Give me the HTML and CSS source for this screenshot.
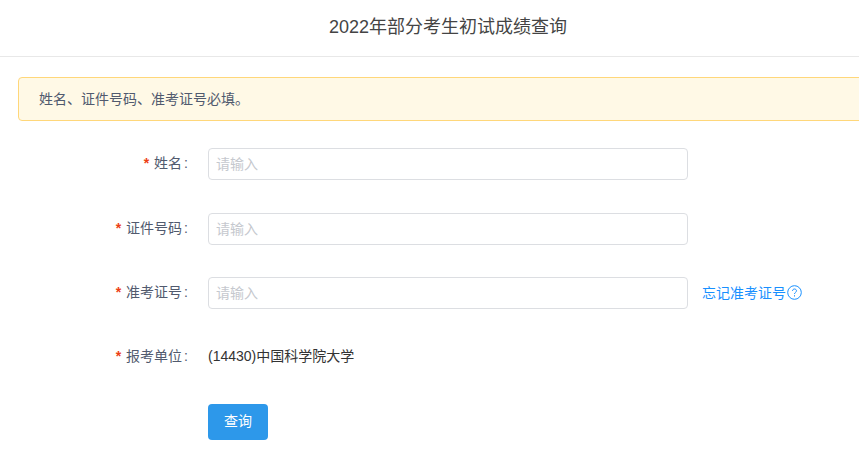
FILE: index.html
```html
<!DOCTYPE html>
<html lang="zh-CN">
<head>
  <meta charset="UTF-8">
  <title>2022年部分考生初试成绩查询</title>
  <link rel="stylesheet" href="styles.css">
</head>
<body>
  <div class="page">
    <div class="header">2022年部分考生初试成绩查询</div>
    <div class="main">
      <div class="alert">姓名、证件号码、准考证号必填。</div>
      <form class="form">
        <div class="form-item">
          <label class="form-label"><span class="star">*</span>姓名<span class="colon">:</span></label>
          <input class="form-input" type="text" placeholder="请输入">
        </div>
        <div class="form-item">
          <label class="form-label"><span class="star">*</span>证件号码<span class="colon">:</span></label>
          <input class="form-input" type="text" placeholder="请输入">
        </div>
        <div class="form-item">
          <label class="form-label"><span class="star">*</span>准考证号<span class="colon">:</span></label>
          <input class="form-input" type="text" placeholder="请输入">
          <a class="forgot" href="#">忘记准考证号<svg class="help" width="15" height="15" viewBox="0 0 15 15" fill="none" stroke="#1890ff"><circle cx="7.5" cy="7.5" r="6.8"/><path d="M5.5 6c0-1.2.9-2 2-2s2 .8 2 1.8c0 1.5-2 1.6-2 3.2"/><path d="M7.5 10.2v1.3"/></svg></a>
        </div>
        <div class="form-item form-item-text">
          <label class="form-label"><span class="star">*</span>报考单位<span class="colon">:</span></label>
          <span class="form-value">(14430)中国科学院大学</span>
        </div>
        <div class="form-actions">
          <button class="btn" type="button">查询</button>
        </div>
      </form>
    </div>
  </div>
</body>
</html>
```

FILE: styles.css
```css
html, body {
  overflow: hidden;
}

body {
  margin: 0;
  font-family: "Liberation Sans", "Noto Sans CJK SC", sans-serif;
  font-size: 14px;
  color: #515a6e;
  background: #fff;
}

.page {
  width: 896px;
}

.header {
  height: 56px;
  line-height: 54px;
  text-align: center;
  font-size: 18px;
  color: #444;
  border-bottom: 1px solid #e8e8e8;
}

.main {
  padding: 20px 0 0 18px;
}

.alert {
  height: 42px;
  line-height: 42px;
  padding-left: 20px;
  font-size: 14px;
  color: #515a6e;
  background: #fff9e6;
  border: 1px solid #ffd77a;
  border-radius: 4px;
}

.form {
  padding-top: 27px;
}

.form-item {
  display: flex;
  align-items: center;
  height: 32px;
  margin-bottom: 32.5px;
}

.form-item-text {
  height: 30px;
}

.form-label {
  width: 190px;
  padding: 0 20px 4px 0;
  box-sizing: border-box;
  text-align: right;
  font-size: 14px;
  color: #515a6e;
}

.star {
  color: #ed3f14;
  font-weight: bold;
  margin-right: 5px;
}

.colon {
  margin-left: 2px;
}

.form-input {
  width: 480px;
  height: 32px;
  box-sizing: border-box;
  padding: 0 7px;
  font-family: inherit;
  font-size: 14px;
  border: 1px solid #dcdee2;
  border-radius: 4px;
  outline: none;
}

.form-input::placeholder {
  color: #c5c8ce;
}

.forgot {
  display: flex;
  align-items: center;
  margin-left: 14px;
  padding-bottom: 3px;
  font-size: 14px;
  color: #1890ff;
  text-decoration: none;
}

.help {
  margin-left: 1px;
  margin-top: 1px;
}

.form-value {
  padding-bottom: 3px;
  font-size: 14px;
  color: #333;
}

.form-actions {
  padding-left: 190px;
}

.btn {
  width: 60px;
  height: 36px;
  padding: 0 0 4px;
  font-family: inherit;
  font-size: 14px;
  color: #fff;
  background: #2d98ea;
  border: none;
  border-radius: 4px;
}
```
